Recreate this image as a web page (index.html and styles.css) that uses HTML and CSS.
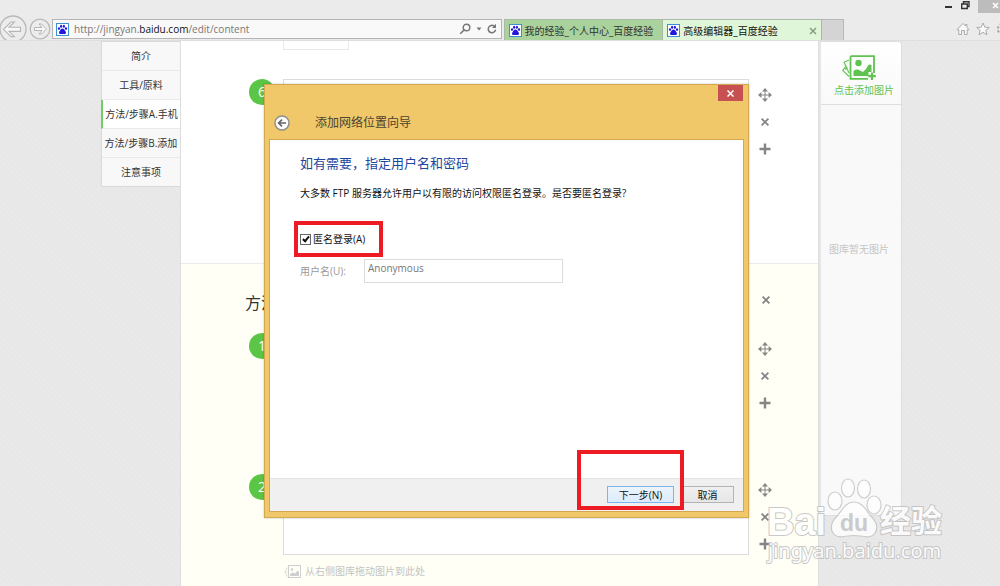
FILE: index.html
```html
<!DOCTYPE html>
<html lang="zh-CN">
<head>
<meta charset="utf-8">
<meta name="viewport" content="width=device-width, initial-scale=1">
<title>高级编辑器_百度经验</title>
<link rel="stylesheet" href="styles.css">
</head>
<body>
<svg class="sprites" aria-hidden="true">
  <symbol id="paw" viewBox="0 0 13 13">
    <rect x="0.5" y="0.5" width="12" height="12" fill="#fff" stroke="#3d8fd6"/>
    <g fill="#2319dc">
      <ellipse cx="3" cy="5.6" rx="1.1" ry="1.4"/><ellipse cx="5.1" cy="3.3" rx="1.1" ry="1.5"/>
      <ellipse cx="7.9" cy="3.3" rx="1.1" ry="1.5"/><ellipse cx="10" cy="5.6" rx="1.1" ry="1.4"/>
      <path d="M6.5 5.6C8 5.6 8.3 7 9.3 7.9C10.6 9.2 10 11.1 8.3 11.1H4.7C3 11.1 2.4 9.2 3.7 7.9C4.7 7 5 5.6 6.5 5.6Z"/>
    </g>
  </symbol>
  <symbol id="move" viewBox="0 0 14 14">
    <path d="M7 2V12M2 7H12" fill="none" stroke="#858585"/>
    <path d="M7 0L10 3.4H4ZM7 14L4 10.6H10ZM0 7L3.4 4V10ZM14 7L10.6 10V4Z" fill="#858585"/>
  </symbol>
  <symbol id="cross" viewBox="0 0 14 14">
    <path d="M3.6 3.6L10.4 10.4M10.4 3.6L3.6 10.4" fill="none" stroke="#858585" stroke-width="1.8"/>
  </symbol>
  <symbol id="plus" viewBox="0 0 14 14">
    <path d="M7 1.5V12.5M1.5 7H12.5" fill="none" stroke="#858585" stroke-width="2.4"/>
  </symbol>
  <symbol id="drop" viewBox="0 0 17 13">
    <rect x="4.5" y="0.5" width="12" height="12" fill="none" stroke="#cfcfcf"/>
    <path d="M6 11V9L8.5 7.4L11 8.6L13.6 5.6L15 7V11Z" fill="#cfcfcf"/><circle cx="8" cy="4.5" r="1.3" fill="#cfcfcf"/>
    <path d="M3.5 2.6L0.8 6.6L3.5 11.5M3.5 6L2 7.6" fill="none" stroke="#d8d8d8"/>
  </symbol>
</svg>

<header class="browser">
  <div class="window-controls">
    <button class="win-btn" aria-label="最小化"><svg width="8" height="13"><path d="M1 7H8" stroke="#333" stroke-width="2"/></svg></button>
    <button class="win-btn" aria-label="还原"><svg width="10" height="13"><path d="M1.7 4H7.3V8.5H1.7ZM3.5 3.5V1.7H9V6.5H7.5" fill="none" stroke="#333" stroke-width="1.4"/></svg></button>
    <button class="win-btn win-close" aria-label="关闭"><svg width="22" height="13"><path d="M15 3L20 8M20 3L15 8" stroke="#fff" stroke-width="1.6"/></svg></button>
  </div>
  <div class="toolbar">
    <div class="history">
      <button class="nav-btn" aria-label="后退"><svg width="28" height="28" viewBox="0 0 28 28"><circle cx="13" cy="14" r="13" fill="#ececec" stroke="#b9b9b9" stroke-width="1.3"/><path d="M3.5 14.3L11 7H14.4L9 12.2H20.5V16.4H9L14.4 21.6H11Z" fill="#f8f8f8" stroke="#b5b5b5" stroke-width="1.1"/></svg></button>
      <button class="nav-btn" aria-label="前进"><svg width="22" height="28" viewBox="0 0 22 28"><circle cx="11" cy="14" r="9.8" fill="#ececec" stroke="#b9b9b9" stroke-width="1.3"/><path d="M17.5 14L12.5 9H10L13 12.5H5.5V15.5H13L10 19H12.5Z" fill="#f8f8f8" stroke="#b5b5b5"/></svg></button>
    </div>
    <div class="address">
      <svg width="13" height="13"><use href="#paw"/></svg>
      <a class="url" href="#">http://jingyan.<b>baidu.com</b>/edit/content</a>
      <button aria-label="搜索"><svg width="12" height="12"><circle cx="7.5" cy="4.5" r="3.3" fill="none" stroke="#777" stroke-width="1.4"/><path d="M5 7L1.2 10.8" stroke="#777" stroke-width="1.6"/></svg></button>
      <button aria-label="展开"><svg width="6" height="12"><path d="M0.5 4.500H5.500L3 7.500Z" fill="#777"/></svg></button>
      <button aria-label="刷新"><svg width="10" height="12"><path d="M7.3 3.2A3.7 3.7 0 1 0 8.6 6.6" fill="none" stroke="#777" stroke-width="1.5"/><path d="M5 4.9H9V0.8Z" fill="#777"/></svg></button>
    </div>
    <nav class="tabs" aria-label="标签页">
      <a class="tab" href="#"><svg width="13" height="13"><use href="#paw"/></svg><span>我的经验_个人中心_百度经验</span></a>
      <a class="tab tab-active" href="#"><svg width="13" height="13"><use href="#paw"/></svg><span>高级编辑器_百度经验</span><svg class="tab-close" width="8" height="8"><path d="M1 1L7 7M7 1L1 7" stroke="#8a9a86" stroke-width="1.5"/></svg></a>
      <button class="tab-new" aria-label="新建标签页"></button>
    </nav>
    <div class="shortcuts">
      <button aria-label="主页"><svg width="14" height="14"><path d="M1 7.5L7 1.5L9.5 4V2.5H11V5.5L13 7.5L12 8.2L11.2 7.6V12.5H8.5V8.5H5.5V12.5H2.8V7.6L2 8.2Z" fill="#fafafa" stroke="#aaa"/></svg></button>
      <button aria-label="收藏夹"><svg width="14" height="14"><path d="M7 1L8.8 5.2L13.3 5.5L9.9 8.3L11 12.8L7 10.3L3 12.8L4.1 8.3L0.7 5.5L5.2 5.2Z" fill="#fafafa" stroke="#aaa"/></svg></button>
      <button aria-label="工具"><svg width="14" height="14"><circle cx="7" cy="7" r="2.3" fill="none" stroke="#aaa"/><circle cx="7" cy="7" r="5.2" fill="none" stroke="#aaa" stroke-width="2" stroke-dasharray="2.4 1.7"/></svg></button>
    </div>
  </div>
</header>

<div class="page">
  <nav class="outline" aria-label="目录">
    <a href="#">简介</a>
    <a href="#">工具/原料</a>
    <a class="current" href="#">方法/步骤A.手机</a>
    <a href="#">方法/步骤B.添加</a>
    <a href="#">注意事项</a>
  </nav>

  <main class="editor">
    <section class="part part-first">
      <div class="picture-slot"></div>
      <div class="step">
        <span class="number">6</span>
        <div class="step-body"><textarea aria-label="步骤 6"></textarea></div>
        <div class="tools">
          <button aria-label="移动"><svg width="14" height="14"><use href="#move"/></svg></button>
          <button aria-label="删除"><svg width="14" height="14"><use href="#cross"/></svg></button>
          <button aria-label="添加"><svg width="14" height="14"><use href="#plus"/></svg></button>
        </div>
      </div>
    </section>
    <section class="part part-second">
      <div class="part-head">
        <h2>方法</h2>
        <button aria-label="删除方法"><svg width="14" height="14"><use href="#cross"/></svg></button>
      </div>
      <div class="step">
        <span class="number">1</span>
        <div class="step-body"><textarea aria-label="步骤 1"></textarea></div>
        <div class="tools">
          <button aria-label="移动"><svg width="14" height="14"><use href="#move"/></svg></button>
          <button aria-label="删除"><svg width="14" height="14"><use href="#cross"/></svg></button>
          <button aria-label="添加"><svg width="14" height="14"><use href="#plus"/></svg></button>
        </div>
      </div>
      <div class="step">
        <span class="number">2</span>
        <div class="step-body">
          <textarea aria-label="步骤 2"></textarea>
          <p class="drop-hint"><svg width="17" height="13"><use href="#drop"/></svg>从右侧图库拖动图片到此处</p>
        </div>
        <div class="tools">
          <button aria-label="移动"><svg width="14" height="14"><use href="#move"/></svg></button>
          <button aria-label="删除"><svg width="14" height="14"><use href="#cross"/></svg></button>
          <button aria-label="添加"><svg width="14" height="14"><use href="#plus"/></svg></button>
        </div>
      </div>
    </section>
  </main>

  <aside class="library">
    <button class="add-picture">
      <svg width="34" height="26" viewBox="0 0 34 26">
        <g fill="none" stroke="#5fc350"><path d="M8.5 1.2V23.8H26M8.5 1.2H32V18" stroke-width="1.8"/><path d="M7 5L2 7.2L7 18M4.5 10.5L0.8 15.5L7 21.5M3 14.5L5.5 12.5" stroke-width="1.1"/></g>
        <circle cx="16.5" cy="8" r="3.2" fill="#5fc350"/>
        <path d="M11.5 21V16Q15 13.5 18 15.5L21 17Q24 15 26 10.5Q27.5 9 29.5 10V17H26.5V21Z" fill="#5fc350"/>
        <path d="M30 17.5V25M26.2 21.2H33.8" stroke="#5fc350" stroke-width="2.2"/>
      </svg>
      点击添加图片
    </button>
    <p>图库暂无图片</p>
  </aside>
</div>

<div class="wizard" role="dialog" aria-labelledby="wizard-title">
  <div class="wizard-head">
    <button class="wizard-back" aria-label="返回"><svg width="16" height="16"><circle cx="8" cy="8" r="7" fill="#fff" stroke="#8f8f8f" stroke-width="1.5"/><path d="M12 8H5M8 4.6L4.6 8L8 11.4" fill="none" stroke="#666" stroke-width="1.7"/></svg></button>
    <h1 id="wizard-title">添加网络位置向导</h1>
    <button class="wizard-close" aria-label="关闭"><svg width="7" height="7"><path d="M0.5 0.5L6.5 6.5M6.5 0.5L0.5 6.5" stroke="#fff" stroke-width="1.5"/></svg></button>
  </div>
  <form class="wizard-body">
    <div class="wizard-content">
      <h2>如有需要，指定用户名和密码</h2>
      <p>大多数 FTP 服务器允许用户以有限的访问权限匿名登录。是否要匿名登录?</p>
      <label class="check"><input type="checkbox" checked>匿名登录(A)</label>
      <div class="field"><label for="user">用户名(U):</label><input id="user" type="text" value="Anonymous" disabled></div>
    </div>
    <div class="wizard-foot">
      <button type="button" class="primary">下一步(N)</button>
      <button type="button">取消</button>
    </div>
  </form>
  <div class="mark mark-check"></div>
  <div class="mark mark-next"></div>
</div>

<svg class="watermark" width="182" height="90" viewBox="0 0 182 90">
  <g fill="#fff" stroke="#c4c4c4" stroke-width="1.2">
    <ellipse cx="68" cy="23" rx="7" ry="9"/><ellipse cx="81" cy="10" rx="6.500" ry="9"/>
    <ellipse cx="97" cy="11" rx="6.500" ry="9"/><ellipse cx="107" cy="27" rx="7" ry="9"/>
    <path d="M87 24C95 24 98 31 103 37C109 43 112 49 108 55C105 60 99 59 93 58Q87 57 81 58C75 59 69 60 66 55C62 49 65 43 71 37C76 31 79 24 87 24Z"/>
  </g>
  <g class="outlined">
    <text class="logo" x="0" y="57">Bai</text>
    <text class="logo-cn" x="113" y="54">经验</text>
    <text class="logo-url" x="1" y="80">jingyan.baidu.com</text>
  </g>
  <text class="logo-du" x="73" y="53">du</text>
</svg>
</body>
</html>
```
FILE: styles.css
```css
* { box-sizing: border-box; }

body {
  margin: 0;
  min-height: 100vh;
  position: relative;
  overflow: hidden;
  display: flex;
  flex-direction: column;
  font: 10px/16px "Open Sans", "Noto Sans CJK SC", sans-serif;
  color: #333;
  background: #e8e8e8 repeating-linear-gradient(45deg, #e9e9e9 0 2px, #e7e7e7 2px 4px);
}

h1, h2, p { margin: 0; font-weight: 400; }
a { color: inherit; text-decoration: none; }
svg { display: block; flex: none; }
button { margin: 0; padding: 0; border: 0; background: none; font: inherit; color: inherit; }
.sprites { position: absolute; width: 0; height: 0; }

/* Browser frame */
.browser { height: 41px; overflow: hidden; background: #ebebeb; border-bottom: 1px solid #dedede; }
.window-controls { display: flex; justify-content: flex-end; gap: 8px; height: 19px; align-items: flex-start; }
.win-close { background: #bcbcbc; }
.toolbar { display: flex; height: 22px; }
.history { display: flex; align-items: center; gap: 1px; width: 52px; height: 19px; }
.address {
  flex: 448 1 0;
  min-width: 0;
  display: flex;
  align-items: center;
  gap: 5px;
  height: 20px;
  margin-right: 2px;
  border: 1px solid #b4b4b4;
  background: #f9f9f9;
}
.address > :first-child { margin-left: 3px; }
.address > :last-child { margin-right: 4px; }
.url { flex: 1; font-size: 10px; color: #777; white-space: nowrap; }
.url b { font-weight: 400; color: #111; }
.tabs { flex: 341 1 0; display: flex; }
.tab {
  flex: 1;
  display: flex;
  align-items: center;
  gap: 3px;
  padding: 0 4px;
  border: 1px solid #a9b9a5;
  border-bottom: 0;
  background: #a9d29c;
  white-space: nowrap;
  color: #333;
}
.tab-active { border-left: 0; background: #e0f6d9; color: #111; }
.tab-close { margin-left: auto; }
.tab-new { width: 22px; border: 1px solid #b8b8b8; border-width: 1px 1px 0 0; background: #d4d4d4; }
.shortcuts { flex: 166 1 0; display: flex; justify-content: flex-end; align-items: center; gap: 6px; margin-right: -10px; height: 19px; }

/* Editor page */
.page {
  flex: 1;
  display: grid;
  grid-template-columns: minmax(0, 101fr) 79px minmax(0, 639px) 83px minmax(0, 98fr);
}
.outline {
  grid-column: 2;
  align-self: start;
  border: 1px solid #d9d9d9;
  border-right: 0;
  background: #f8f8f8;
  text-align: center;
  white-space: nowrap;
}
.outline a { display: block; height: 29px; padding-top: 6px; border-bottom: 1px solid #eaeaea; }
.outline a:last-child { height: 28px; border-bottom: 0; }
.outline .current { margin-left: -1px; border-left: 2px solid #6fcf60; background: #fff; }
.editor { display: flex; flex-direction: column; border: 1px solid #dedede; border-width: 0 1px; }
.part { padding: 0 45px 0 68px; }
.part-first { min-height: 223px; background: #fff; border-bottom: 1px solid #ebebeb; }
.part-second { flex: 1; background: #fffff5; }
.picture-slot { width: 66px; height: 9px; margin: 0 0 29px 34px; border: 1px solid #e8e8e8; border-top: 0; }
.step { display: flex; gap: 8px; min-height: 141px; }
.part-second .step:last-child { min-height: 0; }
.number {
  width: 26px;
  height: 26px;
  border-radius: 50%;
  background: #5bc546;
  color: #fff;
  font-size: 14px;
  line-height: 26px;
  text-align: center;
}
.step-body { flex: 1; }
.step-body textarea {
  display: block;
  width: 100%;
  height: 81px;
  border: 1px solid #dcdcdc;
  background: #fff;
  resize: none;
}
.tools { display: flex; flex-direction: column; gap: 13px; align-items: center; width: 16px; padding-top: 9px; }
.part-head { display: flex; justify-content: space-between; align-items: flex-start; padding-top: 29px; margin-left: -4px; height: 69px; }
.part-head h2 { font-size: 16px; line-height: 20px; }
.drop-hint { display: flex; align-items: center; gap: 4px; padding: 8px 0 6px 1px; color: #c4c4c4; }

.library {
  grid-column: 4;
  align-self: start;
  height: 475px;
  border: 1px solid #dedede;
  border-left: 2px solid #e6e6e6;
  border-radius: 0 4px 0 0;
  background: #f9f9f9;
}
.add-picture {
  display: flex;
  flex-direction: column;
  align-items: center;
  width: 100%;
  height: 63px;
  padding: 13px 0 0 6px;
  gap: 1px;
  border-bottom: 1px solid #dedede;
  border-radius: 0 4px 0 0;
  background: linear-gradient(#fff, #f9f9f9);
  color: #5fc350;
}
.add-picture svg { margin-right: 10px; }
.library p { padding: 136px 4px 0 0; text-align: center; color: #c6c6c6; }

/* Wizard window */
.wizard {
  position: absolute;
  left: 264px;
  top: 84px;
  width: 485px;
  padding: 0 5px 5px;
  border: 1px solid #d3a850;
  background: #f0c869;
  box-shadow: 0 0 2px rgba(0, 0, 0, 0.25);
}
.wizard-head { display: flex; align-items: flex-start; height: 54px; padding-left: 4px; }
.wizard-back { margin-top: 30px; }
.wizard-head h1 { flex: 1; margin: 28px 0 0 25px; font-size: 12px; line-height: 20px; color: #4c4330; }
.wizard-close { display: grid; place-items: center; width: 25px; height: 16px; background: #c75050; }
.wizard-body { display: flex; flex-direction: column; border: 1px solid #d3a850; margin: 0 -1px; background: #fff; }
.wizard-content { padding: 13px 30px 0; height: 338px; }
.wizard-content h2 { font-size: 13px; line-height: 20px; color: #1c47a0; }
.wizard-content p { margin-top: 12px; color: #111; white-space: nowrap; }
.check { display: flex; align-items: center; gap: 2px; margin-top: 30px; color: #111; }
.check input {
  appearance: none;
  display: grid;
  place-items: center;
  width: 11px;
  height: 11px;
  margin: 0;
  border: 1px solid #666;
  background: #fff;
}
.check input:checked::after {
  content: "";
  width: 2px;
  height: 5px;
  margin-bottom: 2px;
  border: solid #111;
  border-width: 0 2px 2px 0;
  transform: rotate(40deg);
}
.field { display: flex; align-items: center; margin-top: 12px; color: #999; }
.field label { width: 64px; }
.field input {
  width: 199px;
  height: 24px;
  padding: 0 3px 6px;
  border: 1px solid #dcdcdc;
  background: #fff;
  font: inherit;
  color: #777;
}
.wizard-foot {
  display: flex;
  justify-content: flex-end;
  gap: 7px;
  height: 33px;
  padding: 7px 9px 0;
  border-top: 1px solid #e3e3e3;
  background: #f0f0f0;
}
.wizard-foot button {
  width: 53px;
  height: 17px;
  border: 1px solid #b4b4b4;
  background: linear-gradient(#f0f0f0, #e6e6e6);
  line-height: 14px;
  color: #111;
}
.wizard-foot .primary { width: 67px; border-color: #7eb4ea; background: linear-gradient(#ecf4fc, #dcecfc); }

/* Highlight frames */
.mark { position: absolute; border: 4px solid #ed1c24; pointer-events: none; }
.mark-check { left: 29px; top: 136px; width: 89px; height: 36px; }
.mark-next { left: 312px; top: 365px; width: 107px; height: 60px; }

.watermark { position: absolute; left: 767px; top: 478px; opacity: 0.8; pointer-events: none; overflow: visible; }
.outlined { fill: #fff; stroke: #bcbcbc; stroke-width: 2px; stroke-linejoin: round; paint-order: stroke; }
.logo { font: 700 38px "Liberation Sans", sans-serif; }
.logo-cn { font: 700 31px "Noto Sans CJK SC", sans-serif; }
.logo-url { font: 400 20px "Noto Sans", sans-serif; }
.logo-du { font: 700 23px "Liberation Sans", sans-serif; fill: #c4c4c4; }
```
